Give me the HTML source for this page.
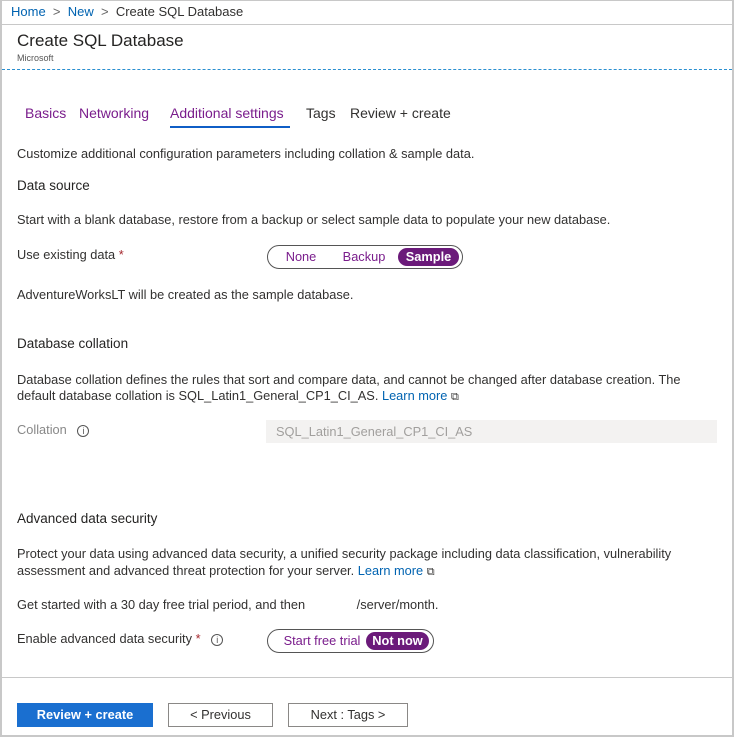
<!DOCTYPE html>
<html><head><style>
*{margin:0;padding:0;box-sizing:border-box}
body{width:734px;height:737px;overflow:hidden;background:#fff;font-family:"Liberation Sans",sans-serif;color:#323130;font-size:12.8px;position:relative}
.frame{position:absolute;left:0;top:0;width:734px;height:737px;border:2px solid #c8c8c8;border-top:1px solid #c8c8c8}
.a{position:absolute;white-space:nowrap}
.p{color:#7a1d8c}
.lnk{color:#0063b1}
.tog{position:absolute;border:1px solid #555;border-radius:12px;height:24px;background:#fff}
.tog span{position:absolute;top:2px;height:18px;line-height:18px;border-radius:9px;text-align:center;font-size:12.8px}
.sel{background:#6b1a7a;color:#fff;font-weight:bold}
.btn{position:absolute;top:703px;height:24px;border:1px solid #8a8886;text-align:center;line-height:22px;font-size:12.8px}
.info{display:inline-block;width:12px;height:12px;border:1px solid #555;border-radius:50%;font-size:9px;line-height:10px;text-align:center;color:#555;vertical-align:middle}
.h{font-size:13.5px;color:#252423}
</style></head><body>
<div class="frame"></div>
<div class="a" style="left:11px;top:4px;font-size:13px"><span class="lnk">Home</span> &nbsp;<span style="color:#666">&gt;</span>&nbsp; <span class="lnk">New</span> &nbsp;<span style="color:#666">&gt;</span>&nbsp; Create SQL Database</div>
<div class="a" style="left:2px;top:24px;width:730px;border-top:1px solid #c8c8c8"></div>
<div class="a" style="left:17px;top:31px;font-size:17px;color:#252423">Create SQL Database</div>
<div class="a" style="left:17px;top:53px;font-size:9px;color:#555">Microsoft</div>
<div class="a" style="left:2px;top:69px;width:730px;border-top:1px dashed #2b8fd0"></div>
<div class="a" style="top:105px;left:25px;font-size:14px"><span class="p">Basics</span></div>
<div class="a" style="top:105px;left:79px;font-size:14px"><span class="p">Networking</span></div>
<div class="a" style="top:105px;left:170px;font-size:14px"><span class="p">Additional settings</span></div>
<div class="a" style="top:126px;left:170px;width:120px;height:2px;background:#0f5ec6"></div>
<div class="a" style="top:105px;left:306px;font-size:14px">Tags</div>
<div class="a" style="top:105px;left:350px;font-size:14px">Review + create</div>
<div class="a" style="left:17px;top:146px">Customize additional configuration parameters including collation &amp; sample data.</div>
<div class="a h" style="left:17px;top:178px">Data source</div>
<div class="a" style="left:17px;top:212px">Start with a blank database, restore from a backup or select sample data to populate your new database.</div>
<div class="a" style="left:17px;top:247px">Use existing data <span style="color:#a4262c">*</span></div>
<div class="tog" style="left:267px;top:245px;width:196px">
<span class="p" style="left:10px;width:46px">None</span>
<span class="p" style="left:70px;width:52px">Backup</span>
<span class="sel" style="left:130px;width:61px">Sample</span></div>
<div class="a" style="left:17px;top:287px">AdventureWorksLT will be created as the sample database.</div>
<div class="a h" style="left:17px;top:336px">Database collation</div>
<div class="a" style="left:17px;top:372px">Database collation defines the rules that sort and compare data, and cannot be changed after database creation. The</div>
<div class="a" style="left:17px;top:388px">default database collation is SQL_Latin1_General_CP1_CI_AS. <span class="lnk">Learn more</span> <span style="font-size:11px">&#x29C9;</span></div>
<div class="a" style="left:17px;top:422px;color:#888">Collation &nbsp;&nbsp;<span class="info">i</span></div>
<div class="a" style="left:266px;top:420px;width:451px;height:23px;background:#f3f2f1;color:#a19f9d;padding:4px 10px">SQL_Latin1_General_CP1_CI_AS</div>
<div class="a h" style="left:17px;top:511px">Advanced data security</div>
<div class="a" style="left:17px;top:546px">Protect your data using advanced data security, a unified security package including data classification, vulnerability</div>
<div class="a" style="left:17px;top:563px">assessment and advanced threat protection for your server. <span class="lnk">Learn more</span> <span style="font-size:11px">&#x29C9;</span></div>
<div class="a" style="left:17px;top:597px">Get started with a 30 day free trial period, and then <span style="display:inline-block;width:48px"></span>/server/month.</div>
<div class="a" style="left:17px;top:631px">Enable advanced data security <span style="color:#a4262c">*</span> &nbsp;&nbsp;<span class="info">i</span></div>
<div class="tog" style="left:267px;top:629px;width:167px">
<span class="p" style="left:8px;width:92px">Start free trial</span>
<span class="sel" style="left:98px;width:63px">Not now</span></div>
<div class="a" style="left:2px;top:677px;width:730px;border-top:1px solid #c8c8c8"></div>
<div class="btn" style="left:17px;width:136px;background:#1a6fd0;border-color:#1a6fd0;color:#fff;font-weight:bold">Review + create</div>
<div class="btn" style="left:168px;width:105px">&lt; Previous</div>
<div class="btn" style="left:288px;width:120px">Next : Tags &gt;</div>
</body></html>
